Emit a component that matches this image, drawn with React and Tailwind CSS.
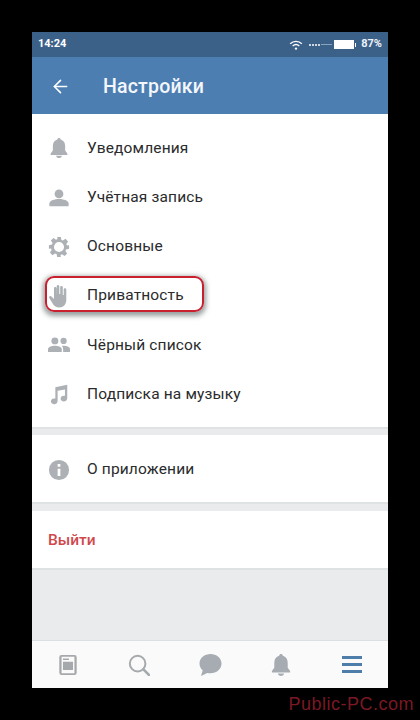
import { ArrowLeft } from "lucide-react";

const font = "font-['Roboto','Liberation_Sans',sans-serif]";

function BellIcon({ className }) {
  return (
    <svg viewBox="0 0 24 24" className={className} fill="currentColor">
      <path d="M12 1c-1 0-1.700.7-1.800 1.700C7 3.500 5.300 6.300 5.300 9.800v5L2.900 18v1.500h18.200V18l-2.400-3.200v-5c0-3.500-1.700-6.300-4.900-7.100C13.700 1.700 13 1 12 1z" />
      <path d="M8.800 20.500h6.400c-.3 1.500-1.700 2.500-3.200 2.500s-2.900-1-3.200-2.500z" />
    </svg>
  );
}

function PersonIcon({ className }) {
  return (
    <svg viewBox="0 0 24 24" className={className} fill="currentColor">
      <circle cx="12" cy="7.500" r="4.800" />
      <path d="M1.500 21v-3c0-3.400 6-5 10.500-5s10.500 1.600 10.500 5v3z" />
    </svg>
  );
}

function GearIcon({ className }) {
  return (
    <svg viewBox="0 0 24 24" className={className} fill="currentColor">
      <path
        fillRule="evenodd"
        d="M10 1h4l.6 3.300 1.700.7 2.800-1.900 2.800 2.800-1.900 2.800.7 1.700L23 10v4l-3.300.6-.7 1.700 1.900 2.800-2.800 2.800-2.800-1.900-1.700.7L14 23h-4l-.6-3.300-1.700-.7-2.800 1.900-2.800-2.800 1.900-2.800-.7-1.700L1 14v-4l3.300-.6.7-1.700-1.900-2.800 2.800-2.800L8.700 4l1.700-.7zM12 6.500a5.500 5.500 0 1 0 0 11 5.500 5.500 0 0 0 0-11z"
      />
    </svg>
  );
}

function HandIcon({ className }) {
  return (
    <svg viewBox="0 0 24 24" className={className} fill="currentColor">
      <path d="M11 1c.8 0 1.300.6 1.300 1.300V10h.9V3.300c0-.8.6-1.300 1.300-1.300s1.300.6 1.300 1.300V11h.9V5.500c0-.8.6-1.300 1.300-1.300s1.300.6 1.300 1.300V16c0 4.400-3 7.500-7 7.500-3 0-5-1.300-6.500-3.800L2.300 14c-.4-.7-.2-1.400.4-1.800.6-.4 1.300-.2 1.800.4L7 15V4.300C7 3.500 7.600 3 8.300 3s1.300.6 1.300 1.300V10h.1V2.300C9.700 1.600 10.300 1 11 1z" />
    </svg>
  );
}

function PeopleIcon({ className }) {
  return (
    <svg viewBox="0 0 24 24" className={className} fill="currentColor">
      <circle cx="7.500" cy="7.500" r="3.800" />
      <circle cx="17" cy="7.500" r="3.400" />
      <path d="M0 19.500v-3C0 14 4.500 12.800 7.500 12.800s7.500 1.200 7.500 3.700v3z" />
      <path d="M16.500 19.500v-3c0-1.300-.6-2.500-1.500-3.300.7-.2 1.400-.4 2.200-.4 2.700 0 6.800 1.100 6.800 3.700v3z" />
    </svg>
  );
}

function MusicIcon({ className }) {
  return (
    <svg viewBox="0 0 24 24" className={className} fill="currentColor">
      <path d="M8 4.500 21 2v15h-.1a3.600 3.200 0 1 1-2.400-3V7L10.500 8.500V20h-.1a3.600 3.200 0 1 1-2.400-3z" />
    </svg>
  );
}

function InfoIcon({ className }) {
  return (
    <svg viewBox="0 0 24 24" className={className} fill="currentColor">
      <path
        fillRule="evenodd"
        d="M12 1a11 11 0 1 0 0 22 11 11 0 0 0 0-22zM10.500 5.500h3v3h-3zM10.500 10.500h3v8h-3z"
      />
    </svg>
  );
}

function NewsIcon({ className }) {
  return (
    <svg viewBox="0 0 24 24" className={className} fill="currentColor">
      <path
        fillRule="evenodd"
        d="M5 1h14a2.500 2.500 0 0 1 2.500 2.500v17A2.500 2.500 0 0 1 19 23H5a2.500 2.500 0 0 1-2.500-2.500v-17A2.500 2.500 0 0 1 5 1zm0 2v18h14V3z"
      />
      <path d="M6.500 5H13v1.500H6.500zM6.500 8.500h11v9h-11z" />
    </svg>
  );
}

function SearchIcon({ className }) {
  return (
    <svg viewBox="0 0 24 24" className={className} fill="none" stroke="currentColor">
      <circle cx="10.500" cy="10.500" r="8.500" strokeWidth="2.200" />
      <path d="m16.800 16.800 6 6" strokeWidth="3" strokeLinecap="round" />
    </svg>
  );
}

function ChatIcon({ className }) {
  return (
    <svg viewBox="0 0 24 24" className={className} fill="currentColor">
      <path d="M12.500 1C6.500 1 1.500 5 1.500 10.500c0 2.700 1.200 5.100 3.200 6.800L3 23l6.300-3.100c1 .3 2.100.4 3.200.4 6 0 11-4.200 11-9.800S18.500 1 12.500 1z" />
    </svg>
  );
}

function StatusBar() {
  return (
    <div className="flex h-[25px] items-center justify-between bg-[#3c6189] px-[6px] text-white">
      <span className="text-[11px] font-bold">14:24</span>
      <div className="flex items-center">
        <svg viewBox="0 0 16 12" className="h-[10px] w-[14px]" fill="none" stroke="currentColor">
          <path d="M1 4.500c4-4 10-4 14 0" strokeWidth="1.500" />
          <path d="M4 7.200c2.400-2.200 5.600-2.200 8 0" strokeWidth="1.500" />
          <circle cx="8" cy="10.300" r="1.400" fill="currentColor" stroke="none" />
        </svg>
        <div className="ml-[6px] flex items-center gap-[1px]">
          <span className="size-[2px] rounded-full bg-white" />
          <span className="size-[2px] rounded-full bg-white" />
          <span className="size-[2px] rounded-full bg-white" />
          <span className="size-[2px] rounded-full bg-white" />
          <span className="h-[1px] w-[11px] bg-[#8aa3bd]" />
        </div>
        <div className="ml-[2px] h-[9px] w-[20px] bg-white" />
        <div className="ml-[1px] h-[4px] w-[1px] bg-white" />
        <span className="ml-[5px] text-[11px] font-bold text-[#eef3f8]">87%</span>
      </div>
    </div>
  );
}

function MenuRow({ icon: Icon, label, iconSize = "size-[22px]" }) {
  return (
    <div className="flex h-[49.200px] items-center">
      <div className="flex w-[55px] justify-center pr-[1px]">
        <Icon className={`${iconSize} text-[#adb1b5]`} />
      </div>
      <span className="text-[15.500px] tracking-[0.15px] text-[#2a2b2c]">{label}</span>
    </div>
  );
}

export default function App() {
  return (
    <div className={`flex h-[720px] w-[420px] flex-col bg-black px-[32px] pt-[32px] ${font}`}>
      <div className="flex h-[656px] flex-col bg-[#e9ebec]">
        <StatusBar />

        <header className="flex h-[57px] items-center bg-[#4d7eb2] pt-[2px] text-white">
          <ArrowLeft className="ml-[18px] size-[21px]" strokeWidth={1.800} />
          <h1 className="ml-[32px] text-[19.500px] font-medium tracking-[0.2px] text-[#f4f7fa]">Настройки</h1>
        </header>

        <section className="border-b-2 border-[#dfe2e3] bg-white pb-[8.200px] pt-[9.800px]">
          <MenuRow icon={BellIcon} label="Уведомления" />
          <MenuRow icon={PersonIcon} label="Учётная запись" />
          <MenuRow icon={GearIcon} label="Основные" />
          <div className="relative">
            <MenuRow icon={HandIcon} label="Приватность" iconSize="size-[24px]" />
            {/* red highlight drawn on top of the row */}
            <div className="absolute left-[13px] top-[5px] h-[36px] w-[159px] rounded-[9px] border-2 border-[#c8202f] shadow-[0_2px_5px_2px_rgba(70,80,80,0.55)]" />
          </div>
          <MenuRow icon={PeopleIcon} label="Чёрный список" />
          <MenuRow icon={MusicIcon} label="Подписка на музыку" />
        </section>

        <section className="mt-[6px] flex h-[69px] items-center border-b-2 border-[#dfe2e3] bg-white pt-[2px]">
          <div className="flex w-[55px] justify-center pr-[1px]">
            <InfoIcon className="size-[22px] text-[#adb1b5]" />
          </div>
          <span className="text-[15.500px] tracking-[0.15px] text-[#2a2b2c]">О приложении</span>
        </section>

        <section className="mt-[7px] flex h-[59px] items-center border-b-2 border-[#dfe2e3] bg-white pl-[16px] pt-[2px]">
          <span className="text-[15.500px] font-medium text-[#d0484c]">Выйти</span>
        </section>

        <nav className="mt-auto grid h-[48px] grid-cols-5 items-center justify-items-center border-t border-[#dcdfe1] bg-[#fafafa]">
          <NewsIcon className="size-[22px] text-[#a6a9ac]" />
          <SearchIcon className="size-[22px] text-[#a6aaad]" />
          <ChatIcon className="size-[24px] text-[#a6acb1]" />
          <BellIcon className="size-[24px] text-[#a6acb1]" />
          <div className="flex w-[20px] flex-col items-center gap-[4.500px]">
            <span className="h-[2.500px] w-full bg-[#4f7da9]" />
            <span className="h-[2.500px] w-full bg-[#4f7da9]" />
            <span className="h-[2.500px] w-full bg-[#4f7da9]" />
          </div>
        </nav>
      </div>

      <div className="-mr-[26px] flex flex-1 items-center justify-end pt-[1px]">
        <span className="font-['Liberation_Sans',sans-serif] text-[18px] tracking-[0.5px] text-[#7a1824]">
          Public-PC.com
        </span>
      </div>
    </div>
  );
}
